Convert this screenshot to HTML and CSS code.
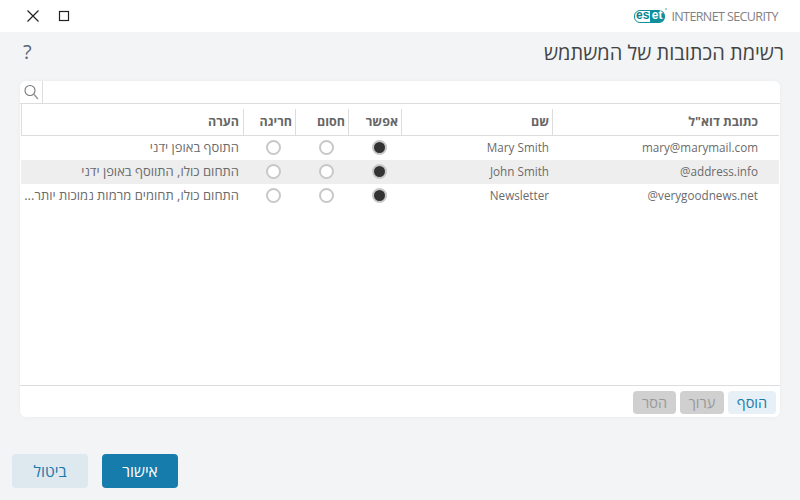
FILE: index.html
```html
<!DOCTYPE html>
<html lang="he">
<head>
    <meta charset="UTF-8">
    <title>רשימת הכתובות של המשתמש</title>
    <link rel="stylesheet" href="styles.css">
</head>
<body>
    <header class="topbar">
        <div class="window-buttons">
            <svg class="win-icon" width="14" height="14" viewBox="0 0 14 14"><path d="M1.5 1.5L12.5 12.5M12.5 1.5L1.5 12.5" stroke="#222" stroke-width="1.2" fill="none"/></svg>
            <svg class="win-icon" width="12" height="12" viewBox="0 0 12 12"><rect x="1.5" y="1.5" width="9" height="9" stroke="#222" stroke-width="1.2" fill="none"/></svg>
        </div>
        <div class="brand">
            <div class="logo"><span class="logo-light">es</span><span class="logo-dark">et</span><span class="logo-mark"></span></div>
            <span class="product">INTERNET SECURITY</span>
        </div>
    </header>
    <div class="title-row">
        <h1>רשימת הכתובות של המשתמש</h1>
        <span class="help">?</span>
    </div>
    <main class="panel">
        <div class="search-row">
            <div class="search-input"></div>
            <div class="search-icon">
                <svg width="16" height="16" viewBox="0 0 16 16"><circle cx="6" cy="6.5" r="5" stroke="#777" stroke-width="1.1" fill="none"/><path d="M9.8 10.3L14 15" stroke="#999" stroke-width="1.4"/></svg>
            </div>
        </div>
        <div class="table">
            <div class="row head">
                <div class="cell email">כתובת דוא"ל</div>
                <div class="cell name">שם</div>
                <div class="cell opt">אפשר</div>
                <div class="cell opt">חסום</div>
                <div class="cell opt">חריגה</div>
                <div class="cell note">הערה</div>
            </div>
            <div class="row">
                <div class="cell email" dir="ltr">mary@marymail.com</div>
                <div class="cell name">Mary Smith</div>
                <div class="cell radio"><span class="dot on"></span></div>
                <div class="cell radio"><span class="dot"></span></div>
                <div class="cell radio"><span class="dot"></span></div>
                <div class="cell note">התוסף באופן ידני</div>
            </div>
            <div class="row alt">
                <div class="cell email" dir="ltr">@address.info</div>
                <div class="cell name">John Smith</div>
                <div class="cell radio"><span class="dot on"></span></div>
                <div class="cell radio"><span class="dot"></span></div>
                <div class="cell radio"><span class="dot"></span></div>
                <div class="cell note">התחום כולו, התווסף באופן ידני</div>
            </div>
            <div class="row">
                <div class="cell email" dir="ltr">@verygoodnews.net</div>
                <div class="cell name">Newsletter</div>
                <div class="cell radio"><span class="dot on"></span></div>
                <div class="cell radio"><span class="dot"></span></div>
                <div class="cell radio"><span class="dot"></span></div>
                <div class="cell note">התחום כולו, תחומים מרמות נמוכות יותר...</div>
            </div>
        </div>
        <div class="panel-footer">
            <button class="small-btn add">הוסף</button>
            <button class="small-btn off">ערוך</button>
            <button class="small-btn off remove">הסר</button>
        </div>
    </main>
    <footer class="actions">
        <button class="big-btn primary">אישור</button>
        <button class="big-btn secondary">ביטול</button>
    </footer>
</body>
</html>
```
FILE: styles.css
```css
* {
    box-sizing: border-box;
}
body {
    margin: 0;
    width: 800px;
    height: 500px;
    overflow: hidden;
    background-color: #f3f4f6;
    font-family: "Open Sans", "Liberation Sans", sans-serif;
    color: #6b6b6b;
    display: flex;
    flex-direction: column;
}
.topbar {
    height: 32px;
    background-color: #fff;
    display: flex;
    justify-content: space-between;
    align-items: center;
    padding: 0 22px 0 26px;
}
.window-buttons {
    display: flex;
    align-items: center;
    gap: 18px;
}
.win-icon {
    display: block;
}
.brand {
    display: flex;
    align-items: center;
    gap: 6px;
}
.logo {
    position: relative;
    display: flex;
    height: 13px;
    width: 31px;
    border: 1.5px solid #0e8f9c;
    border-radius: 6px;
    font-family: "Liberation Sans", sans-serif;
    font-size: 12px;
    font-weight: bold;
    line-height: 9px;
}
.logo-light {
    flex: 1;
    color: #0e7f8c;
    text-align: center;
}
.logo-dark {
    flex: 1;
    background-color: #0e8f9c;
    border-radius: 0 4px 4px 0;
    color: #fff;
    text-align: center;
}
.logo-mark {
    position: absolute;
    top: -3px;
    right: -3px;
    width: 2px;
    height: 2px;
    border-radius: 50%;
    background-color: #7fc4cc;
}
.product {
    font-size: 12.5px;
    color: #808285;
    letter-spacing: -0.6px;
}
.title-row {
    height: 49px;
    display: flex;
    flex-direction: row-reverse;
    justify-content: space-between;
    padding: 9px 16px 0 23px;
}
h1 {
    margin: 0;
    direction: rtl;
    font-size: 20px;
    font-weight: normal;
    line-height: 24px;
    color: #444;
}
.help {
    font-size: 20px;
    line-height: 22px;
    color: #5a6670;
}
.panel {
    width: 760px;
    height: 336px;
    margin-left: 20px;
    background-color: #fff;
    border-radius: 6px;
    box-shadow: 0 0 4px rgba(0, 0, 0, 0.04);
    display: flex;
    flex-direction: column;
}
.search-row {
    height: 23px;
    display: flex;
    flex-direction: row-reverse;
    border-bottom: 1px solid #ddd;
}
.search-icon {
    width: 23px;
    padding: 3px 0 0 4px;
    border-right: 1px solid #ddd;
}
.search-icon svg {
    display: block;
}
.search-input {
    flex: 1;
}
.table {
    flex: 1;
    margin-left: 1px;
    margin-right: 1px;
    direction: rtl;
}
.row {
    display: grid;
    grid-template-columns: 227px 151px 53px 53px 52px 1fr;
    height: 24px;
    font-size: 11.7px;
    line-height: 23px;
}
.row.alt {
    background-color: #eee;
}
.row.head {
    height: 32px;
    line-height: 31px;
    font-size: 12.5px;
    font-weight: bold;
    color: #666;
    border-bottom: 1px solid #ddd;
    border-left: 1px solid #ddd;
}
.cell {
    padding-right: 3px;
    white-space: nowrap;
    overflow: hidden;
}
.head .cell {
    border-left: 1px solid #ddd;
    height: 26px;
    margin-top: 5px;
    line-height: 26px;
}
.head .cell.note {
    border-left: 0;
    font-size: 12.5px;
}
.cell.email {
    padding-right: 21px;
    text-align: right;
}
.cell.note {
    padding-right: 4px;
    font-size: 13px;
}
.cell.radio {
    padding: 0 0 2px 9px;
    display: flex;
    justify-content: center;
    align-items: center;
}
.dot {
    width: 15px;
    height: 15px;
    border-radius: 50%;
    border: 2px solid #c8c8c8;
    background-color: #fff;
}
.dot.on {
    background-color: #333;
    border-color: #c8c8c8;
}
.panel-footer {
    height: 32px;
    border-top: 1px solid #ddd;
    direction: rtl;
    display: flex;
    gap: 4px;
    padding: 5px 4px 0;
}
.small-btn {
    height: 23px;
    border: none;
    border-radius: 4px;
    padding: 0;
    font-family: inherit;
    font-size: 14.5px;
    font-weight: 500;
}
.small-btn.add {
    width: 48px;
    background-color: #e6f0f6;
    color: #1a7aab;
}
.small-btn.off {
    width: 44px;
    background-color: #d0d0d0;
    color: #999;
}
.small-btn.remove {
    width: 43px;
}
.actions {
    display: flex;
    flex-direction: row-reverse;
    justify-content: flex-end;
    gap: 14px;
    padding: 37px 0 0 12px;
}
.big-btn {
    width: 76px;
    height: 34px;
    border: none;
    border-radius: 4px;
    font-family: inherit;
    font-size: 15.5px;
    font-weight: 500;
}
.big-btn.primary {
    background-color: #167cac;
    color: #fff;
}
.big-btn.secondary {
    background-color: #dee8ef;
    color: #1a7aab;
}
```
